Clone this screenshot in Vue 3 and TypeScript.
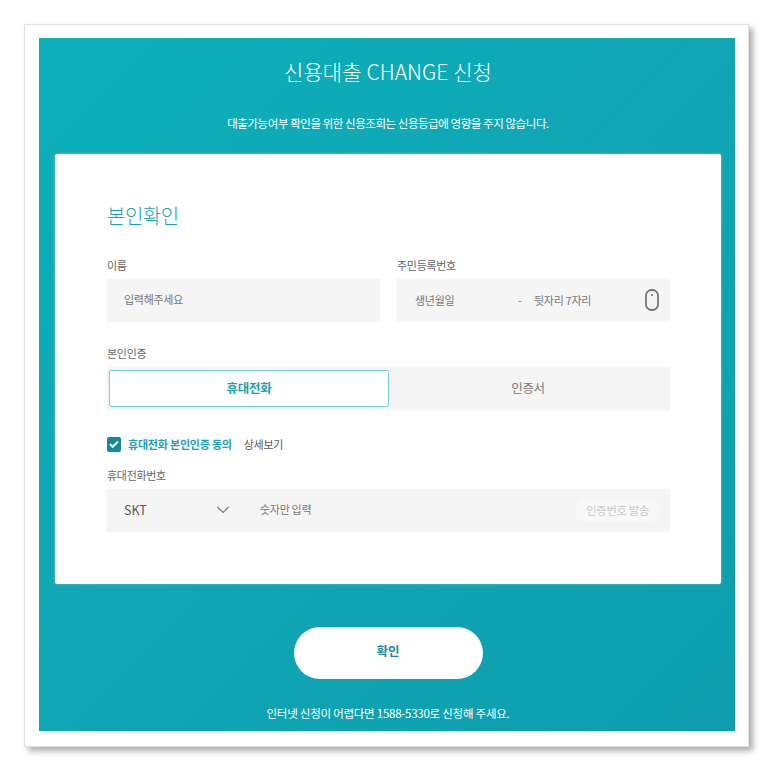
<script setup lang="ts">
import { ref } from "vue";

const method = ref<"phone" | "cert">("phone");
const agreed = ref(true);
const carrier = ref("SKT");
</script>

<template>
  <div class="page">
    <div class="frame">
      <main class="panel">
        <h1 class="title">신용대출 CHANGE 신청</h1>
        <p class="subtitle">대출가능여부 확인을 위한 신용조회는 신용등급에 영향을 주지 않습니다.</p>

        <section class="card">
          <h2 class="card-title">본인확인</h2>

          <div class="two-col">
            <div>
              <div class="label">이름</div>
              <div class="field name-field">입력해주세요</div>
            </div>
            <div>
              <div class="label">주민등록번호</div>
              <div class="field rrn-field">
                <span class="rrn-front">생년월일</span>
                <span class="rrn-dash">-</span>
                <span class="rrn-back">뒷자리 7자리</span>
                <svg class="mouse" width="16" height="24" viewBox="0 0 16 24" fill="none">
                  <rect x="2" y="2" width="12" height="20" rx="5.5" stroke="#757575" stroke-width="1.8" />
                  <circle cx="8" cy="7" r="1" fill="#757575" />
                </svg>
              </div>
            </div>
          </div>

          <div class="label auth-label">본인인증</div>
          <div class="tabs">
            <button class="tab" :class="{ active: method === 'phone' }" @click="method = 'phone'">휴대전화</button>
            <button class="tab" :class="{ active: method === 'cert' }" @click="method = 'cert'">인증서</button>
          </div>

          <div class="agree">
            <span class="check" @click="agreed = !agreed">
              <svg v-if="agreed" width="14" height="14" viewBox="0 0 14 14" fill="none">
                <path d="M3 7.2l2.7 2.6L11 4.6" stroke="#fff" stroke-width="2" />
              </svg>
            </span>
            <span class="agree-text">휴대전화 본인인증 동의</span>
            <span class="agree-more">상세보기</span>
          </div>

          <div class="label phone-label">휴대전화번호</div>
          <div class="field phone-field">
            <span class="carrier">{{ carrier }}</span>
            <svg class="chevron" width="14" height="8" viewBox="0 0 14 8" fill="none">
              <path d="M1.5 1l5.5 5.5L12.5 1" stroke="#777" stroke-width="1.2" />
            </svg>
            <span class="phone-hint">숫자만 입력</span>
            <span class="send">인증번호 발송</span>
          </div>
        </section>

        <button class="confirm">확인</button>
        <p class="footnote">인터넷 신청이 어렵다면 1588-5330로 신청해 주세요.</p>
      </main>
    </div>
  </div>
</template>

<style>
html,
body {
  background: #fff;
}
</style>

<style scoped>
.page {
  width: 774px;
  height: 771px;
  padding: 24px 25px 0 24px;
  box-sizing: border-box;
  overflow: hidden;
  font-family: "Noto Sans CJK KR", "Noto Sans", sans-serif;
}

.frame {
  box-sizing: border-box;
  height: 723px;
  padding: 13px 13px 15px 14px;
  background: #fff;
  border: 1px solid #e0e0e0;
  box-shadow: 4px 4px 6px rgba(0, 0, 0, 0.32);
}

.panel {
  height: 693px;
  box-sizing: border-box;
  padding: 0 14px 0 16px;
  display: flex;
  flex-direction: column;
  background: linear-gradient(135deg, #0cb0ba 0%, #10a6b4 50%, #0d9dac 100%);
  color: #fff;
  text-align: center;
}

.title {
  margin: 17px 0 0;
  font-size: 21px;
  line-height: 32px;
  font-weight: 300;
  letter-spacing: 0.1px;
}

.subtitle {
  margin: 27px 0 0;
  font-size: 11.5px;
  line-height: 18px;
  font-weight: 400;
  letter-spacing: -0.45px;
}

.card {
  box-sizing: border-box;
  height: 430px;
  margin-top: 22px;
  padding: 44px 51px 0 52px;
  background: #fff;
  border-radius: 2px;
  color: #666;
  text-align: left;
  box-shadow: 0 0 3px rgba(160, 190, 200, 0.8);
}

.card-title {
  margin: 0;
  font-size: 20px;
  line-height: 36px;
  font-weight: 300;
  letter-spacing: -0.5px;
  color: #1ba3b4;
}

.two-col {
  display: grid;
  grid-template-columns: 273px 273px;
  column-gap: 17px;
  margin-top: 23px;
}

.label {
  font-size: 11px;
  line-height: 16px;
  letter-spacing: -0.3px;
  color: #666;
}

.field {
  display: flex;
  align-items: center;
  height: 43px;
  box-sizing: border-box;
  margin-top: 6px;
  background: #f5f5f5;
  border-radius: 1px;
  box-shadow: 0 0 1px rgba(0, 0, 0, 0.1);
  font-size: 11px;
  letter-spacing: -0.3px;
  color: #777;
}

.name-field {
  padding: 0 0 3px 17px;
}

.rrn-field {
  height: 42px;
  padding-left: 18px;
}

.rrn-front {
  width: 103px;
}

.rrn-dash {
  width: 16px;
}

.rrn-back {
  flex: 1;
}

.mouse {
  margin-right: 10px;
}

.auth-label {
  margin-top: 23px;
}

.tabs {
  display: grid;
  grid-template-columns: 1fr 278px;
  height: 43px;
  box-sizing: border-box;
  margin-top: 6px;
  padding: 3px 3px 3px 2px;
  background: #f5f5f5;
  box-shadow: 0 0 1px rgba(0, 0, 0, 0.1);
}

.tab {
  padding: 0 0 2px;
  border: 1px solid transparent;
  background: transparent;
  font-family: inherit;
  font-size: 12.5px;
  letter-spacing: -0.3px;
  color: #777;
}

.tab.active {
  border-color: #6fd0d8;
  border-radius: 2px;
  background: #fff;
  color: #1ba0b0;
  font-weight: 700;
}

.agree {
  display: flex;
  align-items: center;
  margin-top: 26px;
  height: 16px;
  font-size: 11px;
  letter-spacing: -0.3px;
}

.check {
  display: flex;
  align-items: center;
  justify-content: center;
  width: 14px;
  height: 15px;
  background: #15899d;
  border-radius: 2px;
}

.agree-text {
  margin-left: 7px;
  color: #1ba0b0;
  font-weight: 700;
  letter-spacing: -0.2px;
}

.agree-more {
  margin-left: 12px;
  color: #555;
}

.phone-label {
  margin-top: 15px;
}

.phone-field {
  margin-top: 6px;
  padding-left: 17px;
}

.carrier {
  width: 92px;
  margin-bottom: 2px;
  font-size: 12.5px;
  letter-spacing: 0;
  color: #555;
}

.chevron {
  margin-right: 30px;
  margin-bottom: 2px;
}

.phone-hint {
  flex: 1;
  margin-bottom: 3px;
}

.send {
  margin-right: 10px;
  padding: 0 11px;
  height: 23px;
  line-height: 23px;
  border-radius: 12px;
  background: #f8f8f8;
  font-size: 11.3px;
  color: #c9c9c9;
}

.confirm {
  width: 189px;
  height: 52px;
  margin: 43px auto 0;
  padding: 0 0 5px;
  border: 0;
  border-radius: 26px;
  background: #fff;
  font-family: inherit;
  font-size: 12.5px;
  font-weight: 700;
  color: #15899d;
}

.footnote {
  margin: 25px 0 0;
  font-size: 11.5px;
  line-height: 18px;
  letter-spacing: -0.25px;
}
</style>
